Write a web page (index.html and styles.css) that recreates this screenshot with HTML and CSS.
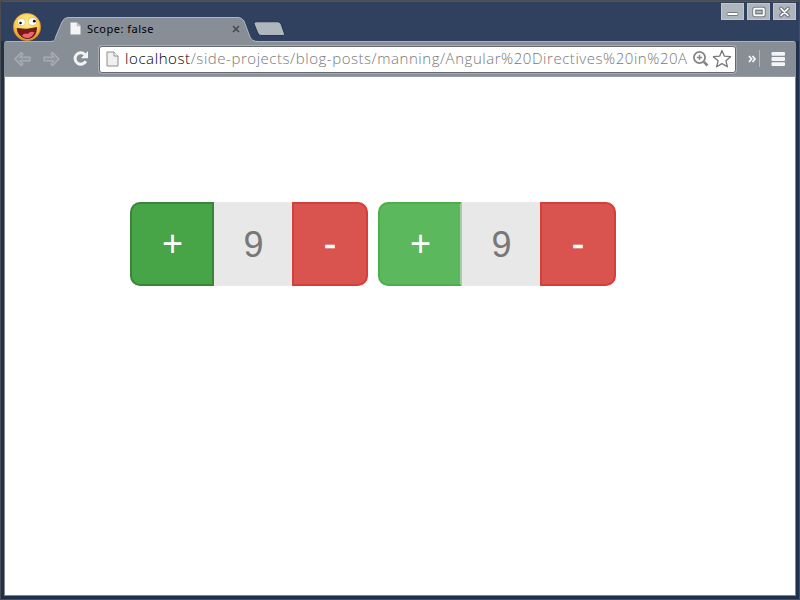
FILE: index.html
```html
<!DOCTYPE html>
<html lang="en">
<head>
<meta charset="utf-8">
<title>Scope: false</title>
<link rel="stylesheet" href="styles.css">
</head>
<body>
<div class="window">
  <header class="titlebar">
    <svg class="avatar" width="30" height="29" viewBox="0 0 30 29">
      <defs><radialGradient id="face" cx=".5" cy=".35" r=".65"><stop offset="0" stop-color="#fff08c"/><stop offset=".65" stop-color="#fbd04e"/><stop offset="1" stop-color="#df8420"/></radialGradient></defs>
      <circle cx="15" cy="15" r="13.7" fill="url(#face)" stroke="#d9893a" stroke-width=".6"/>
      <ellipse cx="9.5" cy="10" rx="4" ry="3.8" fill="#fff" stroke="#c99a48" stroke-width=".5"/>
      <ellipse cx="20.5" cy="9.5" rx="4.2" ry="3.8" fill="#fff" stroke="#c99a48" stroke-width=".5"/>
      <circle cx="8.5" cy="11" r="1.3" fill="#111"/><circle cx="22.3" cy="9.2" r="1.4" fill="#111"/>
      <path d="M5 16.5Q15 18.5 24.5 15.5C24.5 23 20.5 26.5 15.5 26.5S6 23 5 16.5Z" fill="#7b1719" stroke="#4c1515" stroke-width=".8"/>
      <path d="M10 24Q12 20.5 15.5 22Q19 18.5 22.5 20.5Q19.5 26 15.5 26Q12 26 10 24Z" fill="#ec6476"/>
    </svg>
    <div class="tab">
      <svg class="tab-shape" width="208" height="25" viewBox="0 0 208 25">
        <path d="M0 25C5 25 5 22 6 19L12 5Q14 .5 18 .5H188Q192 .5 194 4L200 20Q202 24.5 208 24.5V25Z" fill="#878e96"/>
        <path d="M0 24.5C5 24.5 5 22 6 19L12 5Q14 .5 18 .5H188Q192 .5 194 4L200 20Q202 24.5 208 24.5" fill="none" stroke="#b1b6bc"/>
      </svg>
      <svg class="tab-page" width="11" height="13" viewBox="0 0 11 13"><path d="M.5.5H7L10.5 4V12.5H.5Z" fill="#f5f5f5"/><path d="M7 .5V4H10.5" fill="#c6c9cc" stroke="#aeb2b7" stroke-width=".6"/></svg>
      <span class="tab-title">Scope: false</span>
      <svg class="tab-close" width="8" height="8" viewBox="0 0 8 8"><path d="M1 1L7 7M7 1L1 7" stroke="#44484c" stroke-width="1.5"/></svg>
    </div>
    <svg class="new-tab" width="33" height="16" viewBox="0 0 32 16" preserveAspectRatio="none"><path d="M3 .8H24Q26.5 .8 27.5 3.5L30.5 12.5Q31 14.5 29 14.5H8Q5.5 14.5 4.5 12L1 3Q.5 .8 3 .8Z" fill="#afb6be" stroke="#25364f"/></svg>
    <div class="controls">
      <button class="control" aria-label="Minimize"><svg width="22" height="16" viewBox="0 0 22 16"><rect x="5" y="8.5" width="11" height="3" rx="1" fill="#fff" stroke="#747b82"/></svg></button>
      <button class="control" aria-label="Maximize"><svg width="22" height="16" viewBox="0 0 22 16"><rect x="6" y="4.5" width="10" height="7" rx="1" fill="none" stroke="#747b82" stroke-width="3.4"/><rect x="6" y="4.5" width="10" height="7" rx="1" fill="#b3bac1" stroke="#fff" stroke-width="1.6"/><rect x="8" y="6.5" width="6" height="3" fill="none" stroke="#747b82"/></svg></button>
      <button class="control" aria-label="Close"><svg width="22" height="16" viewBox="0 0 22 16"><path d="M7 4.5L14 11.5M14 4.5L7 11.5" stroke="#747b82" stroke-width="4" stroke-linecap="round"/><path d="M7 4.5L14 11.5M14 4.5L7 11.5" stroke="#fff" stroke-width="1.7" stroke-linecap="round"/></svg></button>
    </div>
  </header>
  <nav class="toolbar">
    <svg class="nav-icons" width="95" height="34" viewBox="0 0 95 34">
      <g fill="#8f969e" stroke="#a9afb5" stroke-width="1.2" stroke-linejoin="round">
        <path d="M10.8 17L17.3 10.5L19 12.2L16.1 15.2H26V18.8H16.1L19 21.8L17.3 23.5Z"/>
        <path d="M55 17L48.5 10.5L46.8 12.2L49.7 15.2H40V18.8H49.7L46.8 21.8L48.5 23.5Z"/>
      </g>
      <path d="M80.8 12.5A5.7 5.7 0 1 0 81.8 19.2" fill="none" stroke="#f3f4f5" stroke-width="3"/>
      <path d="M84 9V16.2H76.8Z" fill="#f3f4f5"/>
    </svg>
    <div class="address">
      <svg class="page-icon" width="13" height="16" viewBox="0 0 13 16"><path d="M1 1H8L12 5V15H1Z" fill="#f0f0f0" stroke="#8e8e8e"/><path d="M8 1V5H12" fill="#fff" stroke="#8e8e8e"/></svg>
      <div class="url"><span class="host">localhost</span><span class="path">/side-projects/blog-posts/manning/Angular%20Directives%20in%20A</span></div>
      <svg class="zoom" width="18" height="18" viewBox="0 0 18 18" fill="none" stroke="#858585"><circle cx="7.5" cy="7.5" r="5.6" stroke-width="1.8"/><path d="M7.5 4.8V10.2M4.8 7.5H10.2" stroke-width="1.4"/><path d="M11.8 11.8L15.5 15.5" stroke-width="2.6"/></svg>
      <svg class="star" width="20" height="20" viewBox="0 0 20 20"><path d="M10 1.5L12.4 7.2L18.6 7.7L13.9 11.8L15.4 17.8L10 14.6L4.6 17.8L6.1 11.8L1.4 7.7L7.6 7.2Z" fill="#fff" stroke="#777" stroke-width="1.3" stroke-linejoin="round"/></svg>
    </div>
    <svg class="menu" width="58" height="34" viewBox="0 0 58 34">
      <path d="M13 14L15.5 17L13 20M16.5 14L19 17L16.5 20" fill="none" stroke="#f5f6f7" stroke-width="1.8"/>
      <path d="M23.5 8V25" stroke="#b3b8bd"/>
      <g fill="#f3f4f5"><rect x="35.5" y="10" width="13.5" height="3.8" rx="1"/><rect x="35.5" y="15.1" width="13.5" height="3.8" rx="1"/><rect x="35.5" y="20.2" width="13.5" height="3.8" rx="1"/></g>
    </svg>
  </nav>
  <main class="page">
    <div class="counter">
      <button class="btn plus active">+</button><span class="value">9</span><button class="btn minus">-</button>
    </div>
    <div class="counter">
      <button class="btn plus">+</button><span class="value">9</span><button class="btn minus">-</button>
    </div>
  </main>
</div>
</body>
</html>
```
FILE: styles.css
```css
* { box-sizing: border-box; }
body { margin: 0; background: #4b4d50; overflow: hidden; }
button { margin: 0; padding: 0; font: inherit; }
svg { display: block; flex: none; }
.window {
  width: 798px;
  height: 598px;
  margin: 1px 0 0 1px;
  display: flex;
  flex-direction: column;
  padding: 0 3px 3px;
  background: #1f304b;
  border-radius: 3px 3px 0 0;
  overflow: hidden;
}
.titlebar {
  height: 40px;
  margin: 0 -3px;
  padding-left: 11px;
  display: flex;
  background: #2f415e;
  border-top: 1px solid #52565f;
  flex: none;
}
.avatar { margin-top: 10px; }
.tab {
  position: relative;
  width: 208px;
  height: 25px;
  margin: 15px 0 0 8px;
  padding: 0 18px 2px 20px;
  display: flex;
  align-items: center;
  flex: none;
}
.tab-shape { position: absolute; left: 0; top: 0; }
.tab-page, .tab-title, .tab-close { position: relative; }
.tab-title {
  margin-left: 6px;
  font: 11px/16px "Noto Sans", sans-serif;
  letter-spacing: 0.5px;
  color: #000;
  white-space: nowrap;
}
.tab-close { margin-left: auto; }
.new-tab { margin: 19px 0 0 -5px; }
.controls { display: flex; gap: 3px; margin: 1px 3px 0 auto; }
.control {
  width: 23px;
  height: 17px;
  background: #aeb5bd;
  border: 1px solid #c1c7cd;
  display: flex;
  align-items: center;
  justify-content: center;
}
.toolbar {
  height: 36px;
  flex: none;
  display: flex;
  align-items: center;
  background: #878e96;
  border-top: 1px solid #adb2b8;
  border-bottom: 1px solid #999fa6;
  border-radius: 3px 3px 0 0;
}
.address {
  width: 637px;
  height: 27px;
  flex: none;
  display: flex;
  align-items: center;
  padding-left: 6px;
  background: #fff;
  border: 1px solid #656970;
  border-radius: 3px;
  box-shadow: 0 0 0 1px #a5abb1;
}
.url {
  width: 564px;
  margin: 0 0 2px 6px;
  font: 300 15px/22px "Open Sans", "Noto Sans", sans-serif;
  white-space: nowrap;
  flex: none;
}
.host { color: #000; letter-spacing: 0.6px; }
.path { color: #777; letter-spacing: 0.54px; }
.zoom { margin-left: 3px; }
.star { margin-left: 2px; }
.page {
  flex: 1;
  display: flex;
  align-items: flex-start;
  gap: 10px;
  padding: 125px 0 0 125px;
  background: #fff;
  border: solid #7f858d;
  border-width: 0 1px 1px;
}
.counter {
  display: flex;
  width: 238px;
  height: 84px;
  font: 36px/80px "Liberation Sans", Arial, sans-serif;
}
.btn { color: #fff; border: 2px solid; }
.plus { width: 84px; padding-left: 1px; background: #5cb85c; border-color: #4cae4c; border-right-color: #aacbaa; border-radius: 10px 0 0 10px; }
.plus.active { background: #47a447; border-color: #398439; }
.value { width: 78px; padding-left: 1px; line-height: 85px; text-align: center; color: #777; background: #e8e8e8; }
.minus { width: 76px; background: #d9534f; border-color: #d43f3a; border-radius: 0 10px 10px 0; -webkit-text-stroke: 0.6px #fff; }
```
